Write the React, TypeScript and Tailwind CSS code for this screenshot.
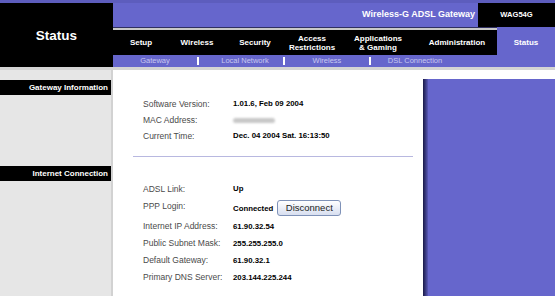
import React from "react";

const tabs = [
  { label: ["Setup"], w: "w-[56px]" },
  { label: ["Wireless"], w: "w-[56px]" },
  { label: ["Security"], w: "w-[60px]" },
  { label: ["Access", "Restrictions"], w: "w-[54px]" },
  { label: ["Applications", "& Gaming"], w: "w-[78px]" },
  { label: ["Administration"], w: "w-[80px]" },
];

const gatewayRows = [
  { label: "Software Version:", value: "1.01.6, Feb 09 2004" },
  { label: "MAC Address:", value: "mac" },
  { label: "Current Time:", value: "Dec. 04 2004 Sat. 16:13:50" },
];

const internetRows = [
  { label: "Internet IP Address:", value: "61.90.32.54" },
  { label: "Public Subnet Mask:", value: "255.255.255.0" },
  { label: "Default Gateway:", value: "61.90.32.1" },
  { label: "Primary DNS Server:", value: "203.144.225.244" },
];

function Row({ label, value }: { label: string; value: string }) {
  return (
    <div className="flex h-[16px] items-center">
      <div className="w-[90px] text-[8.5px] text-[#4a4a4a]">{label}</div>
      {value === "mac" ? (
        // blurred MAC address
        <div className="h-[5px] w-[42px] rounded-sm bg-[#c8c8c8] blur-[1px]" />
      ) : (
        <div className="text-[7.8px] font-bold text-black">{value}</div>
      )}
    </div>
  );
}

export default function App() {
  return (
    <div className="flex h-[296px] w-[555px] flex-col overflow-hidden bg-white font-['Liberation_Sans',Arial,sans-serif]">
      <div className="h-[3px] bg-[#5d5dbd]" />

      {/* header */}
      <div className="flex h-[64px]">
        <div className="flex w-[113px] items-center justify-center bg-black pt-[3px] text-[13.5px] font-bold text-white">
          Status
        </div>
        <div className="flex flex-1 flex-col">
          <div className="flex h-[24px]">
            <div className="flex flex-1 items-center justify-end bg-[#6666cc] pr-[3px] text-[9px] font-bold text-white">
              Wireless-G ADSL Gateway
            </div>
            <div className="flex w-[77px] items-center justify-center bg-black text-[7.6px] font-bold text-white">
              WAG54G
            </div>
          </div>
          <div className="flex h-[28px]">
            <div className="flex flex-1 flex-col">
              <div className="h-[1px] bg-[#303060]" />
              <div className="h-[2px] bg-[#c8c8c8]" />
              <div className="flex flex-1 items-center bg-black">
                {tabs.map((t) => (
                  <div
                    key={t.label[0]}
                    className={`${t.w} text-center text-[8px] font-bold leading-[9px] text-white`}
                  >
                    {t.label.map((l) => (
                      <div key={l}>{l}</div>
                    ))}
                  </div>
                ))}
              </div>
            </div>
            <div className="flex w-[58px] items-center justify-center bg-[#6666cc] pt-[3px] text-[8px] font-bold text-white">
              Status
            </div>
          </div>
          {/* sub navigation */}
          <div className="flex flex-1 items-center bg-[#6666cc] text-[7.5px] text-[#c8c8f0]">
            <div className="w-[84px] text-center">Gateway</div>
            <div className="h-[8px] w-[2px] bg-white" />
            <div className="w-[84px] pl-[8px] text-center">Local Network</div>
            <div className="h-[8px] w-[2px] bg-white" />
            <div className="w-[84px] text-center">Wireless</div>
            <div className="h-[8px] w-[2px] bg-white" />
            <div className="w-[88px] text-center">DSL Connection</div>
          </div>
        </div>
      </div>
      <div className="h-[3px] bg-[#d4d4d4]" />

      {/* body */}
      <div className="flex flex-1">
        <div className="flex w-[113px] flex-col border-r-2 border-[#d2d2d2] bg-[#e6e6e6] pt-[10px]">
          <div className="flex h-[15px] items-center justify-end bg-black pr-[3px] text-[8px] font-bold text-white">
            Gateway Information
          </div>
          <div className="h-[71px]" />
          <div className="flex h-[15px] items-center justify-end bg-black pr-[3px] text-[8px] font-bold text-white">
            Internet Connection
          </div>
        </div>

        <div className="flex w-[310px] flex-col pt-[26px]">
          <div className="pl-[30px]">
            {gatewayRows.map((r) => (
              <Row key={r.label} {...r} />
            ))}
          </div>
          <div className="ml-[20px] mr-[10px] mt-[12px] h-[1px] bg-[#b8b8e0]" />
          <div className="pl-[30px] pt-[24px]">
            <Row label="ADSL Link:" value="Up" />
            <div className="flex h-[21px] items-center">
              <div className="-mt-[3px] w-[90px] text-[8.5px] text-[#4a4a4a]">PPP Login:</div>
              <div className="mt-[3px] text-[7.8px] font-bold text-black">Connected</div>
              <button className="ml-[4px] h-[16px] w-[64px] rounded-[3px] border border-[#7f92b8] bg-gradient-to-b from-white to-[#d8dff0] text-[9.5px] leading-none text-[#222]">
                Disconnect
              </button>
            </div>
            {internetRows.map((r) => (
              <div key={r.label} className="flex h-[17px] items-center">
                <div className="w-[90px] text-[8.5px] text-[#4a4a4a]">{r.label}</div>
                <div className="text-[7.8px] font-bold text-black">{r.value}</div>
              </div>
            ))}
          </div>
        </div>

        <div className="flex flex-1 flex-col pt-[9px]">
          <div className="flex flex-1">
            <div className="w-[5px] bg-gradient-to-r from-[#1a1a48] to-[#5a5ab8]" />
            <div className="flex-1 bg-[#6666cc]" />
          </div>
        </div>
      </div>
    </div>
  );
}
